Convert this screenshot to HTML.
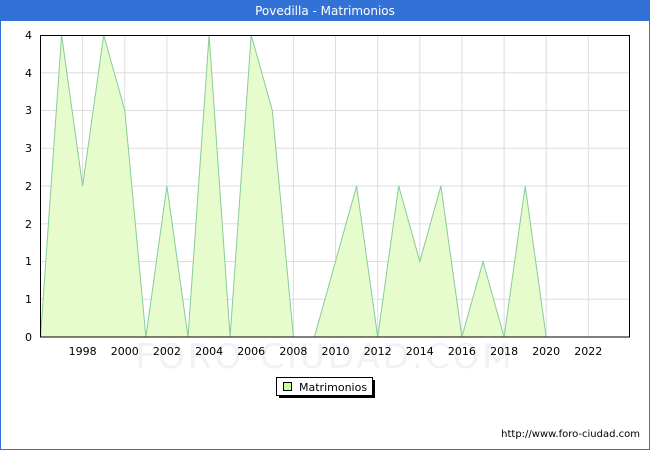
<!DOCTYPE html>
<html><head><style>
body{margin:0;width:650px;height:450px;overflow:hidden;font-family:"DejaVu Sans","Liberation Sans",sans-serif;}
</style></head><body>
<svg width="650" height="450" xmlns="http://www.w3.org/2000/svg" font-family="DejaVu Sans, Liberation Sans, sans-serif">
<rect x="0" y="0" width="650" height="450" fill="#fff"/>
<rect x="0.5" y="0.5" width="649" height="449" fill="none" stroke="#3272d6"/>
<rect x="0" y="0" width="650" height="21" fill="#3272d6"/>
<text x="325" y="15" font-size="12" fill="#fff" text-anchor="middle">Povedilla - Matrimonios</text>
<g stroke="#dddddd" stroke-width="1">
<line x1="40" x2="630" y1="72.75" y2="72.75"/><line x1="40" x2="630" y1="110.5" y2="110.5"/>
<line x1="40" x2="630" y1="148.25" y2="148.25"/><line x1="40" x2="630" y1="186" y2="186"/>
<line x1="40" x2="630" y1="223.75" y2="223.75"/><line x1="40" x2="630" y1="261.5" y2="261.5"/>
<line x1="40" x2="630" y1="299.25" y2="299.25"/>
<line x1="82.6" x2="82.6" y1="35" y2="337"/><line x1="124.8" x2="124.8" y1="35" y2="337"/>
<line x1="166.9" x2="166.9" y1="35" y2="337"/><line x1="209.1" x2="209.1" y1="35" y2="337"/>
<line x1="251.2" x2="251.2" y1="35" y2="337"/><line x1="293.4" x2="293.4" y1="35" y2="337"/>
<line x1="335.5" x2="335.5" y1="35" y2="337"/><line x1="377.7" x2="377.7" y1="35" y2="337"/>
<line x1="419.8" x2="419.8" y1="35" y2="337"/><line x1="461.9" x2="461.9" y1="35" y2="337"/>
<line x1="504.1" x2="504.1" y1="35" y2="337"/><line x1="546.2" x2="546.2" y1="35" y2="337"/>
<line x1="588.3" x2="588.3" y1="35" y2="337"/>
</g>
<text x="325" y="368" font-size="34" fill="#f2f2f6" text-anchor="middle" letter-spacing="3">FORO-CIUDAD.COM</text>
<polygon fill="#e6fccc" stroke="#88cc99" stroke-width="1" points="40.5,337 61.6,35 82.6,186 103.7,35 124.8,110.5 145.9,337 166.9,186 188,337 209.1,35 230.1,337 251.2,35 272.3,110.5 293.4,337"/>
<polygon fill="#e6fccc" stroke="#88cc99" stroke-width="1" points="314.4,337 335.5,261.5 356.6,186 377.7,337 398.7,186 419.8,261.5 440.9,186 461.9,337 483,261.5 504.1,337 525.2,186 546.2,337"/>
<rect x="40.5" y="35.5" width="589" height="301.5" fill="none" stroke="#000"/>
<g font-size="11" fill="#000" text-anchor="end">
<text x="32" y="39">4</text><text x="32" y="77">4</text><text x="32" y="114">3</text>
<text x="32" y="152">3</text><text x="32" y="190">2</text><text x="32" y="228">2</text>
<text x="32" y="265">1</text><text x="32" y="303">1</text><text x="32" y="341">0</text>
</g>
<g font-size="11" fill="#000" text-anchor="middle">
<text x="82.6" y="355">1998</text><text x="124.8" y="355">2000</text><text x="166.9" y="355">2002</text>
<text x="209.1" y="355">2004</text><text x="251.2" y="355">2006</text><text x="293.4" y="355">2008</text>
<text x="335.5" y="355">2010</text><text x="377.7" y="355">2012</text><text x="419.8" y="355">2014</text>
<text x="461.9" y="355">2016</text><text x="504.1" y="355">2018</text><text x="546.2" y="355">2020</text>
<text x="588.3" y="355">2022</text>
</g>
<rect x="279" y="380" width="96" height="18" fill="#000"/>
<rect x="276.5" y="377.5" width="96" height="18" fill="#fff" stroke="#000"/>
<rect x="283.5" y="382.5" width="8" height="8" fill="#ccff99" stroke="#000"/>
<text x="299" y="391" font-size="11">Matrimonios</text>
<text x="640" y="437" font-size="10" text-anchor="end">http://www.foro-ciudad.com</text>
</svg>
</body></html>
